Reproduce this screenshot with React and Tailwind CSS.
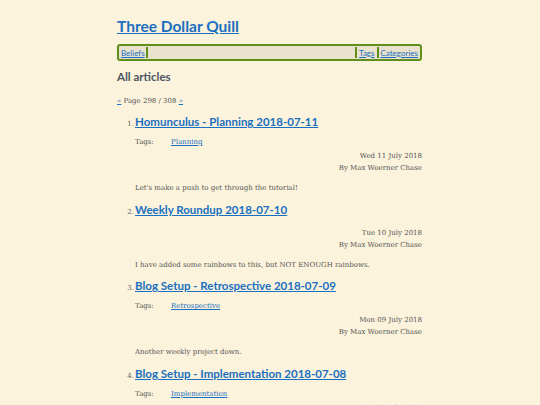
import React from "react";

const posts = [
  {
    title: "Homunculus - Planning 2018-07-11",
    tags: ["Planning"],
    date: "Wed 11 July 2018",
    summary: "Let's make a push to get through the tutorial!",
  },
  {
    title: "Weekly Roundup 2018-07-10",
    tags: [],
    date: "Tue 10 July 2018",
    summary: "I have added some rainbows to this, but NOT ENOUGH rainbows.",
  },
  {
    title: "Blog Setup - Retrospective 2018-07-09",
    tags: ["Retrospective"],
    date: "Mon 09 July 2018",
    summary: "Another weekly project down.",
  },
  {
    title: "Blog Setup - Implementation 2018-07-08",
    tags: ["Implementation"],
    date: "Sun 08 July 2018",
    summary: "The blog is up and running.",
  },
];

const heading = { fontFamily: "Lato, 'Open Sans', sans-serif" };
const body = { fontFamily: "'DejaVu Serif', 'Liberation Serif', serif" };

function Post({ post, n }) {
  return (
    <li className="flex">
      <span className="w-[18px] shrink-0 text-right pr-[1px] text-[7px] leading-[12px] text-[#666] pt-[5px]" style={body}>
        {n}.
      </span>
      <div className="flex-1">
        <a
          href="#"
          className="block text-[11.5px] font-bold leading-[17px] text-[#1a6fc0] underline"
          style={heading}
        >
          {post.title}
        </a>
        <div className="text-[7px] leading-[12px] text-[#555]" style={body}>
          {post.tags.length > 0 && (
            <div className="flex mt-[6px]">
              <span className="w-[36px]">Tags:</span>
              {post.tags.map((t) => (
                <a key={t} href="#" className="text-[#1a6fc0] underline">
                  {t}
                </a>
              ))}
            </div>
          )}
          <div className={"text-right " + (post.tags.length ? "mt-[2px]" : "mt-[9px]")}>
            {post.date}
          </div>
          <div className="text-right">By Max Woerner Chase</div>
          <p className="mt-[8px] mb-[6.5px]">{post.summary}</p>
        </div>
      </div>
    </li>
  );
}

export default function App() {
  return (
    <div className="h-[405px] overflow-hidden bg-[#fbf3dc]">
      <div className="w-[305px] ml-[117px] pt-[14px]">
        <a
          href="#"
          className="block text-[15.5px] font-bold leading-[24px] text-[#1a6fc0] underline"
          style={heading}
        >
          Three Dollar Quill
        </a>
        <nav
          className="mt-[6px] flex items-center h-[17px] border-2 border-[#5f8f1a] rounded-[3px] bg-[#e9e2cd] px-[2px] text-[8px] text-[#555]"
          style={heading}
        >
          <a href="#" className="text-[#1a6fc0] underline pr-[1px]">Beliefs</a>
          <span className="w-[2px] h-[11px] bg-[#5f8f1a]"></span>
          <span className="flex-1"></span>
          <span className="w-[2px] h-[11px] bg-[#5f8f1a]"></span>
          <a href="#" className="text-[#1a6fc0] underline px-[2px]">Tags</a>
          <span className="w-[2px] h-[11px] bg-[#5f8f1a]"></span>
          <a href="#" className="text-[#1a6fc0] underline pl-[2px]">Categories</a>
        </nav>
        <h1 className="mt-[7px] text-[11.5px] font-bold leading-[18px] text-[#4a5560]" style={heading}>
          All articles
        </h1>
        <div className="mt-[10px] text-[7px] leading-[10px] text-[#555]" style={body}>
          <a href="#" className="text-[#1a6fc0] underline">«</a> Page 298 / 308{" "}
          <a href="#" className="text-[#1a6fc0] underline">»</a>
        </div>
        <ol className="mt-[7px]">
          {posts.map((p, i) => (
            <Post key={i} post={p} n={i + 1} />
          ))}
        </ol>
      </div>
    </div>
  );
}
